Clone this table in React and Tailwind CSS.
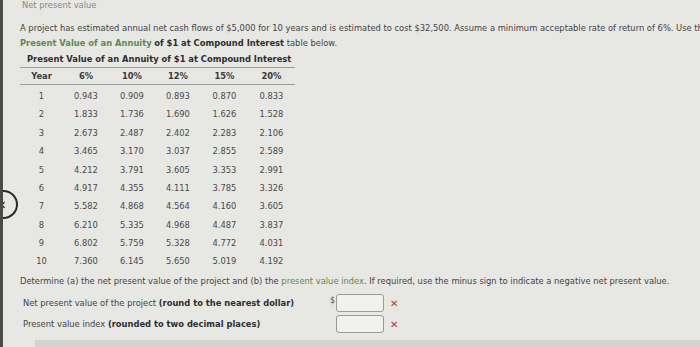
import { ChevronLeft } from "lucide-react"

// annuity factors, one row per year: 6%, 10%, 12%, 15%, 20%
const rates = ["6%", "10%", "12%", "15%", "20%"]
const rows = [
    [1, "0.943", "0.909", "0.893", "0.870", "0.833"],
    [2, "1.833", "1.736", "1.690", "1.626", "1.528"],
    [3, "2.673", "2.487", "2.402", "2.283", "2.106"],
    [4, "3.465", "3.170", "3.037", "2.855", "2.589"],
    [5, "4.212", "3.791", "3.605", "3.353", "2.991"],
    [6, "4.917", "4.355", "4.111", "3.785", "3.326"],
    [7, "5.582", "4.868", "4.564", "4.160", "3.605"],
    [8, "6.210", "5.335", "4.968", "4.487", "3.837"],
    [9, "6.802", "5.759", "5.328", "4.772", "4.031"],
    [10, "7.360", "6.145", "5.650", "5.019", "4.192"],
]

const cols = "grid grid-cols-[43px_46px_46px_46px_47px_47px]"

const AnswerRow = ({ label, hint, dollar }) => (
    <div className="flex items-center h-[21px]">
        <div className="w-[310px] pl-[3px] whitespace-nowrap">
            {label} <span className="font-bold text-[#2e2e2e]">{hint}</span>
        </div>
        <div className="w-[6px] text-[8px] leading-none text-[#555] -mt-1">{dollar ? "$" : ""}</div>
        <div className="w-[48px] h-[18px] rounded-[3px] border border-[#9a9a9a] bg-[#f1f1ef]" />
        <span className="ml-[6px] text-[10px] font-bold text-[#c8323a]">✕</span>
    </div>
)

export default function App() {
    return (
        <div className="relative w-[700px] h-[347px] overflow-hidden bg-[#e7e7e4] border-l-[3px] border-[#4a4a4a] font-['DejaVu_Sans',sans-serif] text-[8.35px] text-[#444]">
            {/* back button on the panel edge */}
            <div className="absolute left-[-14px] top-[190px] w-[29px] h-[29px] rounded-full border-2 border-[#2a2a2a] bg-[#e7e7e4] flex items-center justify-end pr-[8px]">
                <ChevronLeft className="w-[10px] h-[10px] text-[#333]" strokeWidth={3} />
            </div>

            <div className="pl-[17px]">
                <div className="pl-[2px] h-[14px] leading-[10px] text-[#8a8a88]">Net present value</div>

                <div className="mt-[7px] whitespace-nowrap leading-[15px]">
                    <p>
                        A project has estimated annual net cash flows of $5,000 for 10 years and is estimated to cost $32,500. Assume a minimum acceptable rate of return of 6%. Use the
                    </p>
                    <p>
                        <span className="font-bold text-[#5e8a4e]">Present Value of an Annuity</span>{" "}
                        <span className="font-bold text-[#2e2e2e]">of $1 at Compound Interest</span> table below.
                    </p>
                </div>

                {/* factor table */}
                <div className="w-[275px]">
                    <div className="h-[16px] leading-[16px] pl-[7px] font-bold text-[#2e2e2e] whitespace-nowrap">
                        Present Value of an Annuity of $1 at Compound Interest
                    </div>
                    <div className={`${cols} h-[18px] items-center border-t border-b border-[#9c9c9a] font-bold text-[#3a3a3a] text-center`}>
                        <div>Year</div>
                        {rates.map((r) => (
                            <div key={r}>{r}</div>
                        ))}
                    </div>
                    <div className="pt-[2px]">
                        {rows.map((row) => (
                            <div key={row[0]} className={`${cols} h-[18.4px] items-center text-center text-[#4a4a4a]`}>
                                {row.map((v, i) => (
                                    <div key={i}>{v}</div>
                                ))}
                            </div>
                        ))}
                    </div>
                </div>

                <div className="mt-[3px] whitespace-nowrap leading-[14px]">
                    Determine (a) the net present value of the project and (b) the{" "}
                    <span className="text-[#5e8a4e]">present value index</span>. If required, use the minus sign to indicate a negative net present value.
                </div>

                <div className="mt-[5px]">
                    <AnswerRow label="Net present value of the project" hint="(round to the nearest dollar)" dollar />
                    <AnswerRow label="Present value index" hint="(rounded to two decimal places)" />
                </div>
            </div>

            {/* strip along the bottom edge */}
            <div className="absolute left-[32px] right-0 bottom-0 h-[7px] bg-[#d3d3d0]" />
        </div>
    )
}
